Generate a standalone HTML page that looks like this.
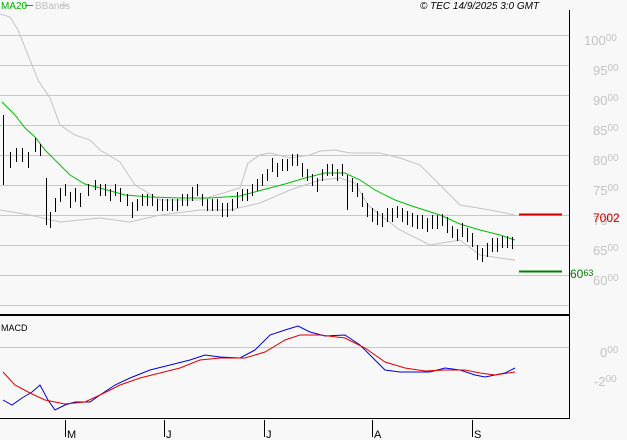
<!DOCTYPE html>
<html><head><style>
html,body{margin:0;padding:0;background:#f8f8f8;}
svg{display:block;font-family:"Liberation Sans",sans-serif;}
</style></head><body>
<svg width="627" height="440" viewBox="0 0 627 440" xmlns="http://www.w3.org/2000/svg">
<rect width="627" height="440" fill="#f8f8f8"/>
<g stroke="#c8c8c8" stroke-width="1">
<line x1="0" y1="35.5" x2="569" y2="35.5"/><line x1="0" y1="65.5" x2="569" y2="65.5"/>
<line x1="0" y1="95.5" x2="569" y2="95.5"/><line x1="0" y1="125.5" x2="569" y2="125.5"/>
<line x1="0" y1="155.5" x2="569" y2="155.5"/><line x1="0" y1="185.5" x2="569" y2="185.5"/>
<line x1="0" y1="215.5" x2="569" y2="215.5"/><line x1="0" y1="245.5" x2="569" y2="245.5"/>
<line x1="0" y1="275.5" x2="569" y2="275.5"/><line x1="0" y1="305.5" x2="569" y2="305.5"/>
<line x1="0" y1="347.5" x2="569" y2="347.5"/>
</g>
<line x1="569.5" y1="10" x2="569.5" y2="419" stroke="#000"/>
<line x1="0" y1="315" x2="569" y2="315" stroke="#000" stroke-width="2"/>
<line x1="0" y1="418.5" x2="570" y2="418.5" stroke="#000"/>
<g font-size="13" fill="#c4c4c4">
<text x="584" y="45">100<tspan font-size="10" dy="-4">00</tspan></text>
<text x="593" y="75">95<tspan font-size="10" dy="-4">00</tspan></text>
<text x="593" y="105">90<tspan font-size="10" dy="-4">00</tspan></text>
<text x="593" y="135">85<tspan font-size="10" dy="-4">00</tspan></text>
<text x="593" y="165">80<tspan font-size="10" dy="-4">00</tspan></text>
<text x="593" y="195">75<tspan font-size="10" dy="-4">00</tspan></text>
<text x="593" y="225">70<tspan font-size="10" dy="-4">00</tspan></text>
<text x="593" y="255">65<tspan font-size="10" dy="-4">00</tspan></text>
<text x="593" y="285">60<tspan font-size="10" dy="-4">00</tspan></text>
<text x="600" y="357">0<tspan font-size="10" dy="-4">00</tspan></text>
<text x="594" y="386">-2<tspan font-size="10" dy="-4">00</tspan></text>
</g>
<text x="593" y="222" font-size="12" fill="#d00000">7002</text>
<text x="570" y="278" font-size="12" fill="#008000">60<tspan font-size="9" dy="-2">63</tspan></text>
<line x1="519" y1="214.5" x2="562" y2="214.5" stroke="#d00000" stroke-width="2"/>
<line x1="519" y1="271.5" x2="562" y2="271.5" stroke="#008000" stroke-width="2"/>
<text x="1" y="9" font-size="10" fill="#00b000">MA20</text>
<line x1="25" y1="5.5" x2="33" y2="5.5" stroke="#00b000"/>
<text x="35" y="9" font-size="10" fill="#c0c0c0">BBands</text>
<line x1="61" y1="5.5" x2="68" y2="5.5" stroke="#c0c0c0"/>
<text x="420" y="9" font-size="10" font-style="italic" fill="#000">© TEC 14/9/2025 3:0 GMT</text>
<polyline fill="none" stroke="#c4c4c4" points="0,14 10,17 18,30 30,60 38,80 50,98 60,125 75,135 90,140 100,150 120,162 135,185 160,200 200,200 240,188 248,163 260,155 270,153 290,158 310,155 320,151 335,150 350,153 380,153 400,158 420,165 440,185 460,205 490,210 515,215"/>
<polyline fill="none" stroke="#c4c4c4" points="0,210 30,215 60,222 100,218 130,222 160,215 200,210 230,210 260,203 290,190 320,180 340,178 355,183 368,205 380,215 400,230 430,245 460,240 480,255 500,258 515,260"/>
<polyline fill="none" stroke="#00c000" points="2,102 15,115 25,128 35,137 45,150 58,163 70,175 85,184 100,188 125,195 150,197 180,198 210,198 240,196 262,190 285,184 305,178 325,173 345,173 360,180 375,190 395,200 415,207 440,215 460,224 480,230 500,235 515,240"/>
<path fill="none" stroke="#000" shape-rendering="crispEdges" transform="translate(0.5,0)" d="M3 115V185M10 152V168M16 148V162M22 148V162M28 152V168M35 138V152M40 144V156M46 178V225M50 212V228M55 198V212M60 188V202M65 184V196M70 192V208M75 188V202M80 193V207M88 184V196M95 180V190M100 184V196M105 184V196M110 189V201M115 184V196M120 188V202M127 194V206M132 202V218M137 199V211M142 194V206M147 194V206M152 194V206M157 199V211M162 199V211M167 199V211M172 199V211M177 199V211M182 194V206M187 194V206M192 187V201M197 184V196M202 194V206M207 199V211M212 199V211M217 199V211M222 203V217M227 203V217M232 199V211M237 192V208M242 189V201M247 189V201M252 184V196M257 179V191M262 174V186M267 169V181M272 158V172M277 163V177M282 159V171M287 159V171M292 154V166M297 154V166M302 163V177M307 169V181M312 174V186M317 178V192M322 169V181M327 164V176M332 164V176M337 169V181M342 164V176M347 175V210M352 178V192M357 183V197M362 193V207M367 203V217M372 208V222M377 211V225M382 213V227M387 208V222M392 208V222M397 206V218M402 208V222M407 211V225M412 213V227M417 215V229M422 215V229M427 218V232M432 215V229M437 215V229M442 214V226M447 217V233M452 226V238M457 229V241M462 223V237M467 228V242M472 233V247M477 245V260M482 248V262M487 243V257M492 238V252M497 238V252M502 236V248M507 236V248M512 237V249"/>
<polyline fill="none" stroke="#0000e0" points="3,400 12,405 22,398 32,392 40,385 48,400 55,410 65,405 75,402 90,402 100,395 115,385 130,378 150,370 170,365 190,360 205,355 220,357 240,358 255,350 270,335 285,330 298,326 310,332 325,336 345,335 360,345 375,360 385,370 400,372 415,372 430,372 445,368 460,370 475,375 485,377 495,375 505,373 515,368"/>
<polyline fill="none" stroke="#e00000" points="3,372 15,385 30,393 45,400 65,404 85,402 100,395 120,385 140,378 160,373 180,368 200,360 220,358 245,358 265,352 285,340 300,335 320,335 345,338 365,348 385,362 405,368 425,371 445,370 465,370 480,373 495,375 515,372"/>
<text x="1" y="331" font-size="9" fill="#000">MACD</text>
<g stroke="#000"><line x1="65.5" y1="420" x2="65.5" y2="437"/><line x1="164.5" y1="420" x2="164.5" y2="437"/><line x1="264.5" y1="420" x2="264.5" y2="437"/><line x1="372.5" y1="420" x2="372.5" y2="437"/><line x1="472.5" y1="420" x2="472.5" y2="437"/></g>
<g font-size="11" fill="#000"><text x="67" y="438">M</text><text x="166" y="438">J</text><text x="266" y="438">J</text><text x="374" y="438">A</text><text x="474" y="438">S</text></g>
</svg>
</body></html>
